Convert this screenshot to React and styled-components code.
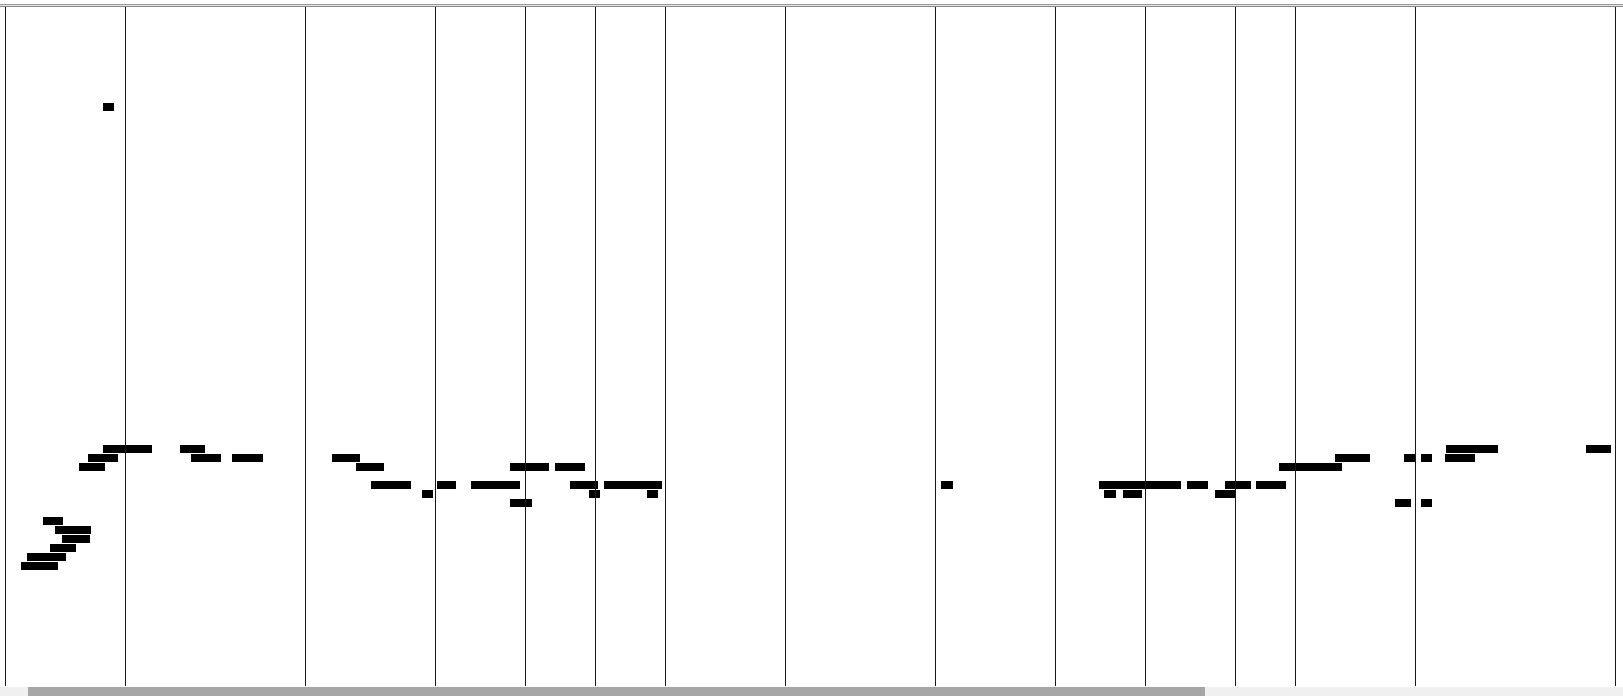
import React from 'react'
import styled, { createGlobalStyle } from 'styled-components'

const LINES = [5, 125, 305, 435, 525, 595, 665, 785, 935, 1055, 1145, 1235, 1295, 1415, 1615]

// [left, right, top] in page pixels, top row is the y of the note
const NOTES = [
    [103, 114, 103],
    [103, 152, 445], [180, 205, 445], [1446, 1498, 445], [1586, 1611, 445],
    [88, 118, 454], [191, 221, 454], [232, 263, 454], [332, 360, 454],
    [1335, 1370, 454], [1404, 1415, 454], [1421, 1432, 454], [1445, 1475, 454],
    [79, 105, 463], [356, 384, 463], [510, 549, 463], [555, 585, 463], [1279, 1342, 463],
    [371, 411, 481], [437, 456, 481], [471, 520, 481], [570, 598, 481], [604, 662, 481],
    [941, 953, 481], [1099, 1181, 481], [1187, 1208, 481], [1225, 1251, 481], [1256, 1286, 481],
    [422, 433, 490], [589, 600, 490], [647, 658, 490], [1104, 1116, 490], [1123, 1142, 490], [1215, 1235, 490],
    [510, 532, 499], [1395, 1411, 499], [1421, 1432, 499],
    [43, 63, 517], [55, 91, 526], [62, 90, 535], [50, 76, 544], [27, 66, 553], [21, 58, 562],
]

const CANVAS_TOP = 7

const GlobalStyle = createGlobalStyle`
    html, body {
        margin: 0;
        height: 100%;
        background: white;
        overflow: hidden;
    }
    #root {
        height: 100%;
    }
`

const Page = styled.div`
    height: 100%;
    display: flex;
    flex-direction: column;
    padding-top: 4px;
    box-sizing: border-box;
`

const Rule = styled.hr`
    flex: none;
    height: 1px;
    margin: 0;
    border: 0;
    border-top: 1px solid #9a9a9a;
    border-bottom: 1px solid #8a8a8a;
    background: #e4e4e4;
`

const Roll = styled.div`
    position: relative;
    flex: 1;
    margin-bottom: 1px;
`

const Note = styled.div`
    position: absolute;
    height: 8px;
    background: black;
`

const BarLine = styled.div`
    position: absolute;
    top: 0;
    bottom: 0;
    width: 1px;
    background: #0000dc;
`

const ScrollTrack = styled.div`
    flex: none;
    height: 9px;
    background: #f0f0f0;
    padding-left: 28px;
`

const ScrollThumb = styled.div`
    width: 1177px;
    height: 100%;
    background: #a6a6a6;
`

export default function App() {
    return (
        <>
            <GlobalStyle />
            <Page>
                <Rule />
                <Roll>
                    {NOTES.map(([left, right, top], i) => (
                        <Note key={i} style={{ left, width: right - left, top: top - CANVAS_TOP }} />
                    ))}
                    {LINES.map(x => (
                        <BarLine key={x} style={{ left: x }} />
                    ))}
                </Roll>
                <ScrollTrack>
                    <ScrollThumb />
                </ScrollTrack>
            </Page>
        </>
    )
}
